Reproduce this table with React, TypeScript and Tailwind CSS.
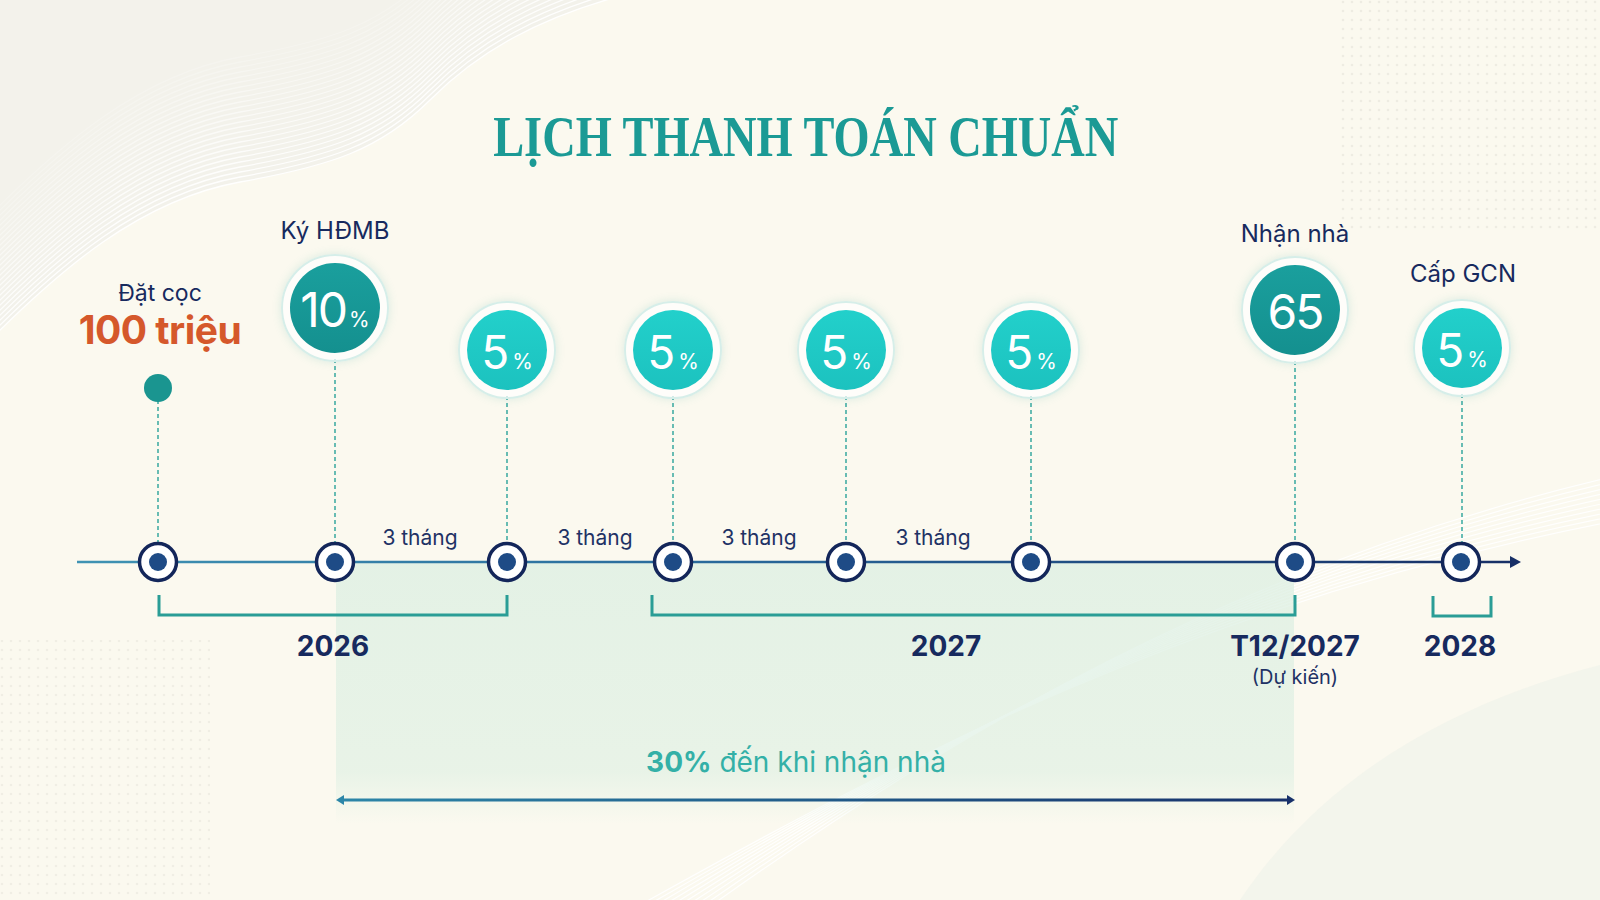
import React from "react";

const NAVY = "#172a5e";

const markers = [158, 335, 507, 673, 846, 1031, 1295, 1461];
const AXIS_Y = 562;

interface Bubble {
  x: number;
  y: number;
  size: number;
  value: string;
  dark: boolean;
  pct: boolean;
}

const bubbles: Bubble[] = [
  { x: 335, y: 308, size: 90, value: "10", dark: true, pct: true },
  { x: 507, y: 350, size: 80, value: "5", dark: false, pct: true },
  { x: 673, y: 350, size: 80, value: "5", dark: false, pct: true },
  { x: 846, y: 350, size: 80, value: "5", dark: false, pct: true },
  { x: 1031, y: 350, size: 80, value: "5", dark: false, pct: true },
  { x: 1295, y: 310, size: 90, value: "65", dark: true, pct: false },
  { x: 1462, y: 348, size: 80, value: "5", dark: false, pct: true },
];

const gaps = [420, 595, 759, 933];

// edge of the light swirl in the top-left corner
const swirl = (o: number) =>
  `M -10 ${340 - o} C 60 ${270 - o}, 140 ${200 - o}, 240 ${182 - o} C 330 ${166 - o}, 380 ${150 - o}, 430 ${100 - o} C 480 ${50 - o}, 540 ${18 - o}, 620 ${-4 - o}`;

function Background() {
  return (
    <svg className="absolute inset-0 pointer-events-none" width="1600" height="900" viewBox="0 0 1600 900">
      <defs>
        <pattern id="dots" width="9" height="9" patternUnits="userSpaceOnUse">
          <circle cx="2" cy="2" r="1.3" fill="#e8e6dc" />
        </pattern>
      </defs>
      <rect x="1340" y="0" width="260" height="230" fill="url(#dots)" opacity="0.7" />
      <rect x="0" y="640" width="210" height="260" fill="url(#dots)" opacity="0.6" />
      <path d={`${swirl(0)} L 620 -20 L -10 -20 Z`} fill="#f3f2eb" />
      {Array.from({ length: 26 }).map((_, i) => (
        <path key={i} d={swirl(i * 5)} stroke="#ffffff" strokeWidth="1.3" fill="none" opacity={0.95 - i * 0.03} />
      ))}
      {Array.from({ length: 10 }).map((_, i) => (
        <path
          key={"b" + i}
          d={`M ${640 + i * 8} ${905} C ${900 + i * 6} ${760 - i * 3}, ${1200 + i * 4} ${600 - i * 4}, ${1620} ${520 - i * 5}`}
          stroke="#ffffff"
          strokeWidth="1.2"
          fill="none"
          opacity="0.9"
        />
      ))}
      <path d="M 1240 900 C 1320 780, 1450 700, 1620 660 L 1620 900 Z" fill="#eef2ea" opacity="0.6" />
    </svg>
  );
}

function Lines() {
  return (
    <svg className="absolute inset-0 pointer-events-none" width="1600" height="900" viewBox="0 0 1600 900">
      <defs>
        <linearGradient id="axis" x1="77" y1="0" x2="1520" y2="0" gradientUnits="userSpaceOnUse">
          <stop offset="0" stopColor="#3f93b3" />
          <stop offset="0.45" stopColor="#28689a" />
          <stop offset="1" stopColor="#172f66" />
        </linearGradient>
        <linearGradient id="span" x1="337" y1="0" x2="1294" y2="0" gradientUnits="userSpaceOnUse">
          <stop offset="0" stopColor="#2c86a8" />
          <stop offset="1" stopColor="#17306a" />
        </linearGradient>
        <linearGradient id="shade" x1="0" y1="0" x2="0" y2="1">
          <stop offset="0" stopColor="#dcefe2" stopOpacity="0.75" />
          <stop offset="0.8" stopColor="#dcefe2" stopOpacity="0.6" />
          <stop offset="1" stopColor="#dcefe2" stopOpacity="0" />
        </linearGradient>
      </defs>

      <rect x="336" y={AXIS_Y} width="958" height="262" fill="url(#shade)" />

      {/* dashed drops */}
      <line x1="158" y1="400" x2="158" y2={AXIS_Y - 20} stroke="#2aa39b" strokeWidth="1.4" strokeDasharray="4 3" />
      {bubbles.map((b, i) => (
        <line
          key={i}
          x1={b.x}
          y1={b.y + b.size / 2 + 6}
          x2={b.x}
          y2={AXIS_Y - 20}
          stroke="#2aa39b"
          strokeWidth="1.4"
          strokeDasharray="4 3"
        />
      ))}

      {/* axis */}
      <line x1="77" y1={AXIS_Y} x2="1512" y2={AXIS_Y} stroke="url(#axis)" strokeWidth="2.5" />
      <path d={`M 1510 ${AXIS_Y - 6} L 1521 ${AXIS_Y} L 1510 ${AXIS_Y + 6} Z`} fill="#172f66" />

      {markers.map((x) => (
        <g key={x}>
          <circle cx={x} cy={AXIS_Y} r="18.5" fill="#ffffff" stroke="#13265a" strokeWidth="3.5" />
          <circle cx={x} cy={AXIS_Y} r="9" fill="#1e4b86" />
        </g>
      ))}

      {/* brackets */}
      <path d="M 159 595 V 615 H 507 V 595" stroke="#2a9d96" strokeWidth="3" fill="none" />
      <path d="M 652 595 V 615 H 1295 V 595" stroke="#2a9d96" strokeWidth="3" fill="none" />
      <path d="M 1433 596 V 616 H 1491 V 596" stroke="#2a9d96" strokeWidth="3" fill="none" />

      {/* span arrow */}
      <line x1="342" y1="800" x2="1289" y2="800" stroke="url(#span)" strokeWidth="3" />
      <path d="M 344 795 L 336 800 L 344 805 Z" fill="#2c86a8" />
      <path d="M 1287 795 L 1295 800 L 1287 805 Z" fill="#17306a" />
    </svg>
  );
}

function BubbleNode({ b }: { b: Bubble }) {
  const halo = b.size + 18;
  return (
    <div
      className="absolute flex items-center justify-center rounded-full bg-white/70 border-2 border-[#d6eee9] shadow-[0_0_10px_rgba(80,180,170,0.2)]"
      style={{ left: b.x - halo / 2, top: b.y - halo / 2, width: halo, height: halo }}
    >
      <div
        className={
          b.dark
            ? "flex items-center justify-center rounded-full bg-gradient-to-b from-[#1a9f9d] to-[#14908f] text-white"
            : "flex items-center justify-center rounded-full bg-gradient-to-b from-[#22d0cb] to-[#1cc2bf] text-white"
        }
        style={{ width: b.size, height: b.size }}
      >
        <span className="flex items-baseline leading-none pt-1">
          <span className={b.dark ? "text-[48px] font-normal tracking-[-2px]" : "text-[46px] font-normal"}>{b.value}</span>
          {b.pct && <span className="text-[21px] font-normal ml-[3px]">%</span>}
        </span>
      </div>
    </div>
  );
}

export default function App() {
  return (
    <div
      className="relative w-[1600px] h-[900px] overflow-hidden bg-[#fbf9ef] text-[#172a5e]"
      style={{ fontFamily: "Inter, 'Noto Sans', sans-serif" }}
    >
      <Background />
      <Lines />

      <h1
        className="absolute left-0 right-0 top-[108px] text-center text-[#1b9a95] text-[58px] font-bold leading-none"
        style={{ fontFamily: "'Liberation Serif', 'DejaVu Serif', serif" }}
      >
        <span className="inline-block scale-x-[0.8] translate-x-[6px]">LỊCH THANH TOÁN CHUẨN</span>
      </h1>

      {/* labels above */}
      <div className="absolute left-[235px] w-[200px] top-[219px] text-center text-[24px] leading-none" style={{ color: NAVY }}>
        Ký HĐMB
      </div>
      <div className="absolute left-[1195px] w-[200px] top-[222px] text-center text-[24px] leading-none" style={{ color: NAVY }}>
        Nhận nhà
      </div>
      <div className="absolute left-[1363px] w-[200px] top-[262px] text-center text-[24px] leading-none" style={{ color: NAVY }}>
        Cấp GCN
      </div>

      <div className="absolute left-[60px] w-[200px] top-[282px] flex flex-col items-center leading-none">
        <span className="text-[23px]" style={{ color: NAVY }}>Đặt cọc</span>
        <span className="text-[39px] font-bold text-[#d5582b] mt-[5px] tracking-[-0.5px]">100 triệu</span>
      </div>
      <div className="absolute left-[144px] top-[374px] w-[28px] h-[28px] rounded-full bg-[#1a9590]" />

      {bubbles.map((b, i) => (
        <BubbleNode key={i} b={b} />
      ))}

      {gaps.map((x) => (
        <div
          key={x}
          className="absolute w-[120px] top-[527px] text-center text-[21px] leading-none text-[#1f3265]"
          style={{ left: x - 60 }}
        >
          3 tháng
        </div>
      ))}

      {/* years */}
      <div className="absolute left-[233px] w-[200px] top-[632px] text-center text-[28px] font-bold leading-none">2026</div>
      <div className="absolute left-[846px] w-[200px] top-[632px] text-center text-[28px] font-bold leading-none">2027</div>
      <div className="absolute left-[1195px] w-[200px] top-[632px] flex flex-col items-center leading-none">
        <span className="text-[28px] font-bold">T12/2027</span>
        <span className="text-[20px] mt-[7px] text-[#1f3265]">(Dự kiến)</span>
      </div>
      <div className="absolute left-[1410px] w-[100px] top-[632px] text-center text-[28px] font-bold leading-none">2028</div>

      <div className="absolute left-[596px] w-[400px] top-[748px] text-center text-[28px] leading-none text-[#34b0a7]">
        <span className="font-bold">30%</span> đến khi nhận nhà
      </div>
    </div>
  );
}
